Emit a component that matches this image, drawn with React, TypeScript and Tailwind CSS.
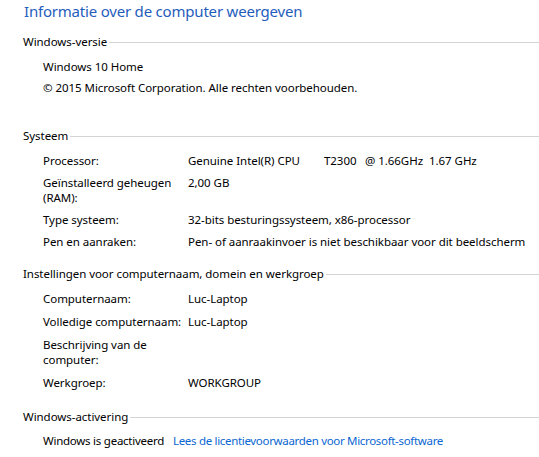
import React from "react";

type Row = { label: string[]; value?: React.ReactNode };

function SectionHeader({ title }: { title: string }) {
  return (
    <div className="flex items-center h-[15px] pl-[23px]">
      <span className="whitespace-nowrap">{title}</span>
      <div className="flex-1 h-px bg-[#d4d4d4] ml-[2px] mt-[1px]" />
    </div>
  );
}

function InfoRow({ row }: { row: Row }) {
  return (
    <div className="flex pl-[43px]">
      <div className="w-[145px] shrink-0">
        {row.label.map((l) => (
          <div key={l} className="h-[15px] whitespace-nowrap">
            {l}
          </div>
        ))}
      </div>
      <div className="h-[15px] whitespace-nowrap">{row.value}</div>
    </div>
  );
}

export default function App() {
  const systeem: Row[] = [
    {
      label: ["Processor:"],
      value: (
        <span className="flex">
          <span className="w-[136px]">Genuine Intel(R) CPU</span>
          <span className="w-[41px]">T2300</span>
          <span className="w-[64px]">@ 1.66GHz</span>
          <span>1.67 GHz</span>
        </span>
      ),
    },
    { label: ["Geïnstalleerd geheugen", "(RAM):"], value: "2,00 GB" },
    { label: ["Type systeem:"], value: "32-bits besturingssysteem, x86-processor" },
    {
      label: ["Pen en aanraken:"],
      value: "Pen- of aanraakinvoer is niet beschikbaar voor dit beeldscherm",
    },
  ];

  const naam: Row[] = [
    { label: ["Computernaam:"], value: "Luc-Laptop" },
    { label: ["Volledige computernaam:"], value: "Luc-Laptop" },
    { label: ["Beschrijving van de", "computer:"] },
    { label: ["Werkgroep:"], value: "WORKGROUP" },
  ];

  return (
    <div className="w-[539px] h-[457px] overflow-hidden bg-white text-black text-[11.5px] tracking-[-0.05px] leading-[15px] font-['Segoe_UI','Noto_Sans','Open_Sans',sans-serif]">
      <h1 className="pl-[24px] h-[22px] leading-[22px] text-[15px] tracking-[-0.2px] text-[#1f5dbd]">
        Informatie over de computer weergeven
      </h1>

      <div className="mt-[12px]">
        <SectionHeader title="Windows-versie" />
        <div className="mt-[10px] pl-[43px] flex flex-col gap-[6px]">
          <div className="h-[15px]">Windows 10 Home</div>
          <div className="h-[15px]">
            © 2015 Microsoft Corporation. Alle rechten voorbehouden.
          </div>
        </div>
      </div>

      <div className="mt-[33px]">
        <SectionHeader title="Systeem" />
        <div className="mt-[10px] flex flex-col gap-[7px]">
          {systeem.map((r) => (
            <InfoRow key={r.label[0]} row={r} />
          ))}
        </div>
      </div>

      <div className="mt-[17px]">
        <SectionHeader title="Instellingen voor computernaam, domein en werkgroep" />
        <div className="mt-[10px] flex flex-col gap-[8px]">
          {naam.map((r) => (
            <InfoRow key={r.label[0]} row={r} />
          ))}
        </div>
      </div>

      <div className="mt-[19px]">
        <SectionHeader title="Windows-activering" />
        <div className="mt-[9px] pl-[43px] flex h-[15px] whitespace-nowrap">
          <span className="w-[130px] tracking-[-0.25px]">Windows is geactiveerd</span>
          <a className="tracking-[-0.32px] text-[#0a66d1] cursor-pointer">
            Lees de licentievoorwaarden voor Microsoft-software
          </a>
        </div>
      </div>
    </div>
  );
}
